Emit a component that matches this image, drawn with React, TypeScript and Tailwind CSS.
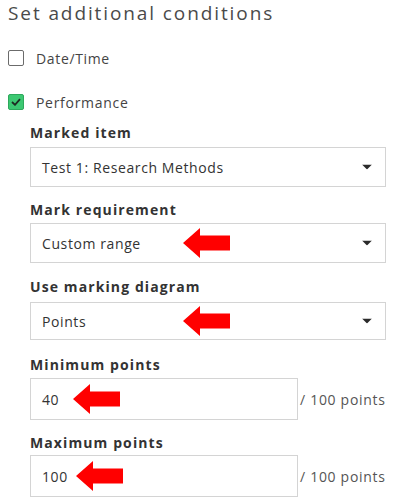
import React from "react";

const Arrow = ({ left }: { left: number }) => {
  return (
    <svg
      width="47"
      height="30"
      viewBox="0 0 47 30"
      className="absolute top-1/2 -translate-y-1/2"
      style={{ left }}
    >
      <polygon
        points="0,15 17,0 17,7.5 47,7.5 47,22.5 17,22.5 17,30"
        fill="#ff0000"
      />
    </svg>
  );
};

const Caret = () => (
  <svg width="10" height="5" viewBox="0 0 10 5" className="absolute right-[13px] top-1/2 -translate-y-1/2">
    <polygon points="0,0 10,0 5,5" fill="#2b2b2b" />
  </svg>
);

const fields = [
  { label: "Marked item", value: "Test 1: Research Methods", kind: "select", mt: "mt-[11px]", mb: "mb-[4px]", h: "h-[40px]", arrow: 0 },
  { label: "Mark requirement", value: "Custom range", kind: "select", mt: "mt-[13px]", mb: "mb-[3px]", h: "h-[40px]", arrow: 152 },
  { label: "Use marking diagram", value: "Points", kind: "select", mt: "mt-[14px]", mb: "mb-[5px]", h: "h-[38px]", arrow: 152 },
  { label: "Minimum points", value: "40", kind: "input", mt: "mt-[15px]", mb: "mb-[3px]", h: "h-[42px]", arrow: 42 },
  { label: "Maximum points", value: "100", kind: "input", mt: "mt-[13px]", mb: "mb-[2px]", h: "h-[42px]", arrow: 45 },
];

export default function App() {
  return (
    <div
      className="w-[395px] h-[502px] bg-white px-2 pt-px overflow-hidden"
      style={{ fontFamily: '"Open Sans", "Liberation Sans", sans-serif' }}
    >
      <h2 className="text-[19px] leading-[24px] tracking-[1.9px] text-[#4a4a4a]">
        Set additional conditions
      </h2>

      <div className="mt-[23px] h-5 flex items-center">
        <div className="w-4 h-4 border border-[#6b6b6b] rounded-[2px] bg-white" />
        <span className="ml-3 text-[14px] tracking-[0.65px] text-[#444]">Date/Time</span>
      </div>

      <div className="mt-6 h-5 flex items-center">
        <div className="w-4 h-4 rounded-[2px] bg-[#3cc872] border border-[#2ea85c] flex items-center justify-center">
          <svg width="10" height="8" viewBox="0 0 10 8">
            <path d="M1 4 L4 6.8 L9 1.2" fill="none" stroke="#1d2b22" strokeWidth="1.8" />
          </svg>
        </div>
        <span className="ml-3 text-[14px] tracking-[0.7px] text-[#444]">Performance</span>
      </div>

      <div className="ml-[22px] w-[356px]">
        {fields.map((f) => (
          <div key={f.label}>
            <div className={`${f.mt} ${f.mb} text-[14px] leading-5 font-bold tracking-[1.1px] text-[#333]`}>
              {f.label}
            </div>
            {f.kind === "select" ? (
              <div className={`relative ${f.h} border border-[#d4d4d4] bg-white flex items-center pl-[11px] text-[14px] tracking-[0.6px] text-[#333]`}>
                {f.value}
                <Caret />
                {f.arrow > 0 && <Arrow left={f.arrow} />}
              </div>
            ) : (
              <div className="flex items-center">
                <div className={`relative w-[268px] ${f.h} border border-[#d4d4d4] bg-white flex items-center pl-[11px] text-[14px] tracking-[0.6px] text-[#333]`}>
                  {f.value}
                  <Arrow left={f.arrow} />
                </div>
                <span className="ml-[2px] text-[14px] tracking-[0.7px] text-[#555]">/ 100 points</span>
              </div>
            )}
          </div>
        ))}
      </div>
    </div>
  );
}
